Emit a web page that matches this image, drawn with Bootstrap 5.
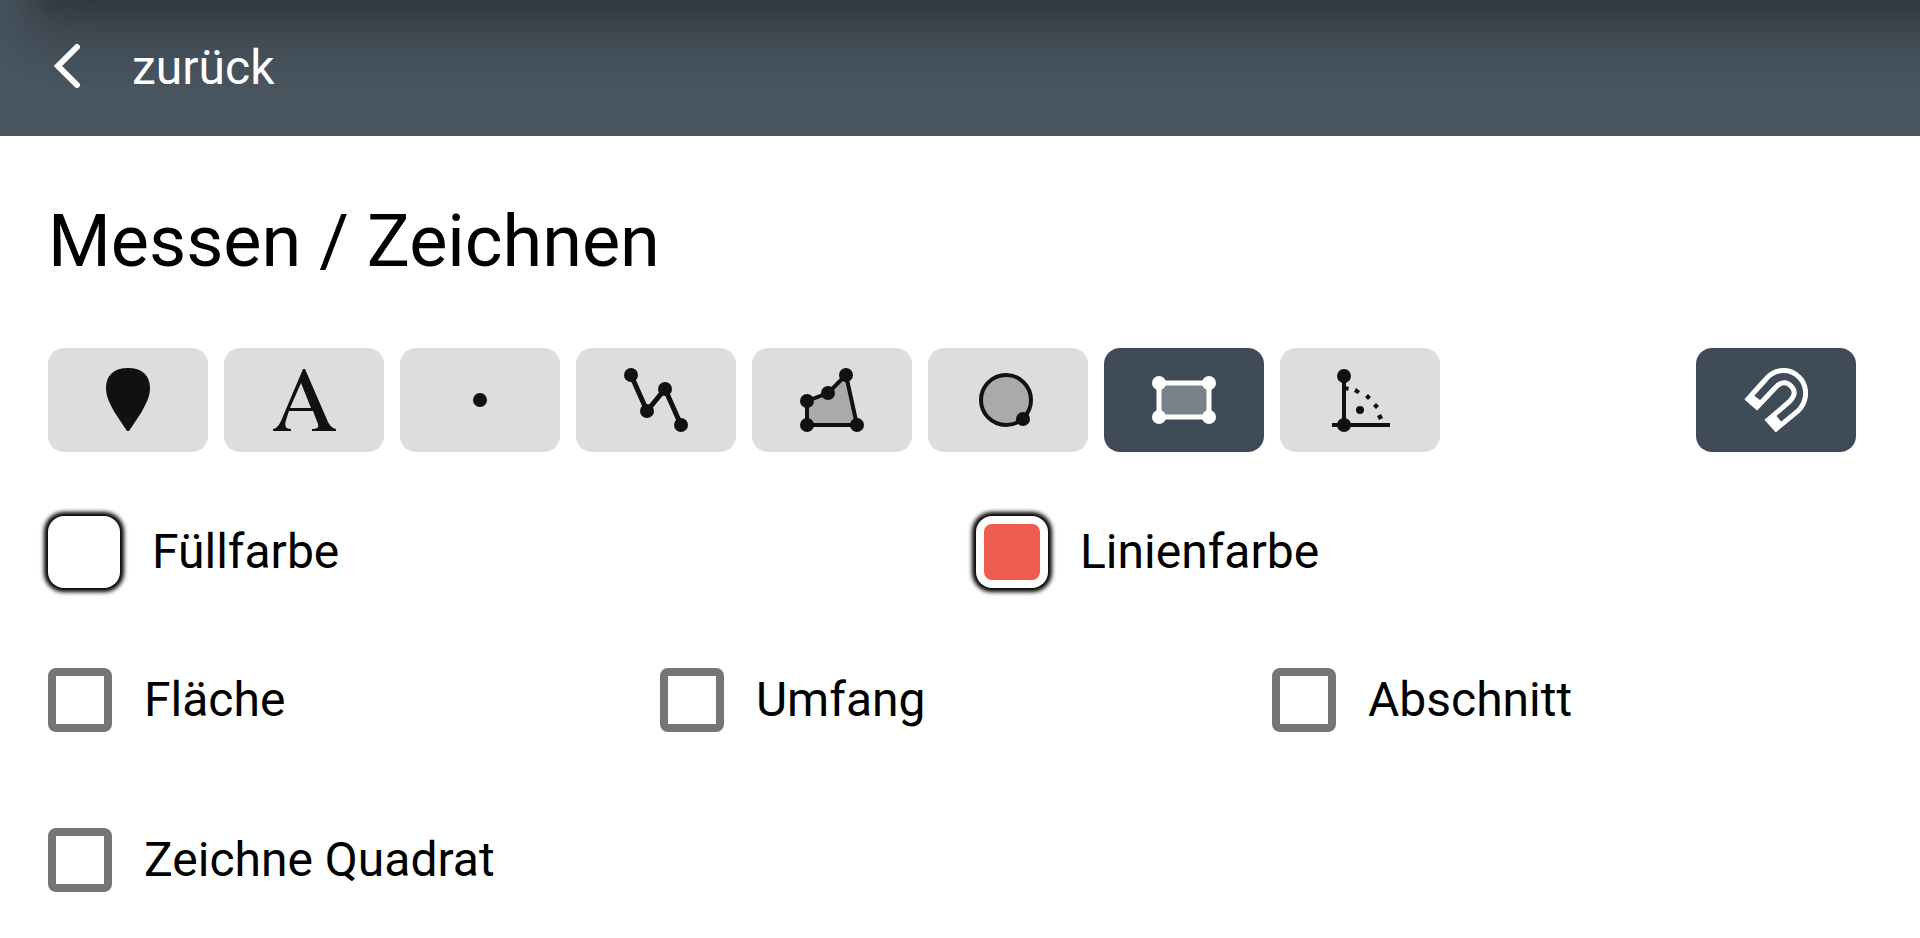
<!DOCTYPE html>
<html lang="de">
<head>
<meta charset="utf-8">
<meta name="viewport" content="width=device-width, initial-scale=1">
<title>Messen / Zeichnen</title>
<link href="https://cdn.jsdelivr.net/npm/bootstrap@5.3.0/dist/css/bootstrap.min.css" rel="stylesheet">
<style>
  body { font-family: Roboto, "Liberation Sans", sans-serif; font-size: 48px; line-height: 64px; color: #000; background: #fff; }
  .topbar { height: 136px; padding-left: 48px; background: #495660; overflow: hidden; }
  /* shadow cast by the panel above the bar */
  .topbar::before { content: ""; position: absolute; left: 32px; right: -80px; top: -200px; height: 200px;
    box-shadow: 0 16px 20px -4px rgba(0,0,0,.14), 0 32px 48px 4px rgba(0,0,0,.14), 0 24px 72px 16px rgba(0,0,0,.14); }
  .back-link { gap: 48px; color: #fff; text-decoration: none; }
  .panel-body { padding: 64px 16px 40px 48px; }
  .panel-title { font-size: 72px; line-height: 84px; font-weight: 400; margin-bottom: 64px; }
  .tools { gap: 16px; margin-right: 48px; }
  .tool { width: 160px; height: 104px; border: 0; border-radius: 16px; background: #ddd; color: #111; padding: 0; }
  .tool.active { background: #3f4c58; color: #fff; }
  .tool svg { width: 64px; height: 64px; display: block; margin: auto; }
  .colors { margin-top: 64px; }
  .color-choice { gap: 32px; }
  .swatch { appearance: none; width: 72px; height: 72px; padding: 8px; border: 0; border-radius: 16px; background: #fff; box-shadow: 0 0 4px 4px #000; }
  .swatch::-webkit-color-swatch-wrapper { padding: 0; }
  .swatch::-webkit-color-swatch { border: 0; border-radius: 8px; }
  .checks { margin: 80px 20px 0 0; row-gap: 96px; }
  .check-choice { gap: 32px; }
  .tick { appearance: none; width: 64px; height: 64px; margin: 0; border: 8px solid #757575; border-radius: 8px; background: #fff; }
  .tick:checked { background: #757575; }
</style>
</head>
<body>
<header class="topbar position-relative d-flex align-items-center">
  <a href="#" class="back-link position-relative d-flex align-items-center">
    <svg width="36" height="48" viewBox="0 0 36 48" fill="none" stroke="currentColor" stroke-width="6" stroke-linecap="round" aria-hidden="true"><path d="M29 3 10 22 29 41"/></svg>
    <span>zurück</span>
  </a>
</header>
<main class="panel-body">
  <h1 class="panel-title">Messen / Zeichnen</h1>
  <div class="tools d-flex" role="toolbar" aria-label="Werkzeuge">
    <button type="button" class="tool" aria-label="Marker"><svg viewBox="0 0 64 64" fill="currentColor"><path d="M32 0C18 0 10 7 10 20c0 9 4 16 9 25l12 18h2l12-18c5-9 9-16 9-25C54 7 46 0 32 0Z"/></svg></button>
    <button type="button" class="tool" aria-label="Text"><svg viewBox="0 0 64 64" fill="currentColor"><path fill-rule="evenodd" d="M31 1h2l23 53q3 6 8 7v2H40v-2q8 0 6-5l-5-13H17l-3 9q-3 9 5 9v2H1v-2q5-1 8-8ZM18 40h21L29 15Z"/></svg></button>
    <button type="button" class="tool" aria-label="Punkt"><svg viewBox="0 0 64 64"><circle cx="32" cy="32" r="7" fill="currentColor"/></svg></button>
    <button type="button" class="tool" aria-label="Linie"><svg viewBox="0 0 64 64" fill="currentColor"><path d="m7 7 16 36 18-22 16 36" fill="none" stroke="currentColor" stroke-width="5"/><circle cx="7" cy="7" r="7"/><circle cx="23" cy="43" r="7"/><circle cx="41" cy="21" r="7"/><circle cx="57" cy="57" r="7"/></svg></button>
    <button type="button" class="tool" aria-label="Polygon"><svg viewBox="0 0 64 64" fill="currentColor"><path d="M7 33 28 25 46 7l11 50H7Z" fill="#aaa" stroke="currentColor" stroke-width="4"/><circle cx="7" cy="33" r="7"/><circle cx="28" cy="25" r="7"/><circle cx="46" cy="7" r="7"/><circle cx="57" cy="57" r="7"/><circle cx="7" cy="57" r="7"/></svg></button>
    <button type="button" class="tool" aria-label="Kreis"><svg viewBox="0 0 64 64" fill="currentColor"><circle cx="30" cy="32" r="25" fill="#aaa" stroke="currentColor" stroke-width="4"/><circle cx="47" cy="51" r="7"/></svg></button>
    <button type="button" class="tool active" aria-label="Rechteck" aria-pressed="true"><svg viewBox="0 0 64 64" fill="currentColor"><path d="M7 15h50v34H7Z" fill="#79838c" stroke="currentColor" stroke-width="5"/><circle cx="7" cy="15" r="7"/><circle cx="57" cy="15" r="7"/><circle cx="7" cy="49" r="7"/><circle cx="57" cy="49" r="7"/></svg></button>
    <button type="button" class="tool" aria-label="Orthogonal"><svg viewBox="0 0 64 64" fill="currentColor"><path d="M16 8v49M4 57h58" stroke="currentColor" stroke-width="4"/><circle cx="16" cy="8" r="7"/><circle cx="16" cy="57" r="7"/><circle cx="32" cy="42" r="4"/><path d="m17 18 4 1-1 4-3-1ZM28 20l4 3-2 3-4-2ZM40 26l3 3-3 3-3-3ZM48 35l3 3-3 3-3-3ZM53 46l2 4-4 2-2-4Z"/></svg></button>
    <button type="button" class="tool active ms-auto" aria-label="Fangmodus" aria-pressed="true"><svg viewBox="0 0 64 64" fill="none" stroke="currentColor" stroke-width="5"><path d="M4 31 22 11C31 0 46 0 55 9s9 24-1 34L32 61l-8-9 21-18c6-6 7-11 2-16s-11-4-16 2L13 39Z"/><path d="m1 32 7-6 12 9-7 7ZM22 51l9-5 8 10-7 7Z" fill="currentColor" stroke="none"/></svg></button>
  </div>
  <div class="colors row g-0">
    <div class="col-6 color-choice d-flex align-items-center">
      <input type="color" class="swatch" id="fill" value="#ffffff"><label for="fill">Füllfarbe</label>
    </div>
    <div class="col-6 color-choice d-flex align-items-center">
      <input type="color" class="swatch" id="line" value="#ee5c4f"><label for="line">Linienfarbe</label>
    </div>
  </div>
  <div class="checks row gx-0">
    <div class="col-4 check-choice d-flex align-items-center"><input type="checkbox" class="tick" id="area"><label for="area">Fläche</label></div>
    <div class="col-4 check-choice d-flex align-items-center"><input type="checkbox" class="tick" id="girth"><label for="girth">Umfang</label></div>
    <div class="col-4 check-choice d-flex align-items-center"><input type="checkbox" class="tick" id="part"><label for="part">Abschnitt</label></div>
    <div class="col-4 check-choice d-flex align-items-center"><input type="checkbox" class="tick" id="square"><label for="square" class="text-nowrap">Zeichne Quadrat</label></div>
  </div>
</main>
<script src="https://cdn.jsdelivr.net/npm/bootstrap@5.3.0/dist/js/bootstrap.bundle.min.js"></script>
</body>
</html>
